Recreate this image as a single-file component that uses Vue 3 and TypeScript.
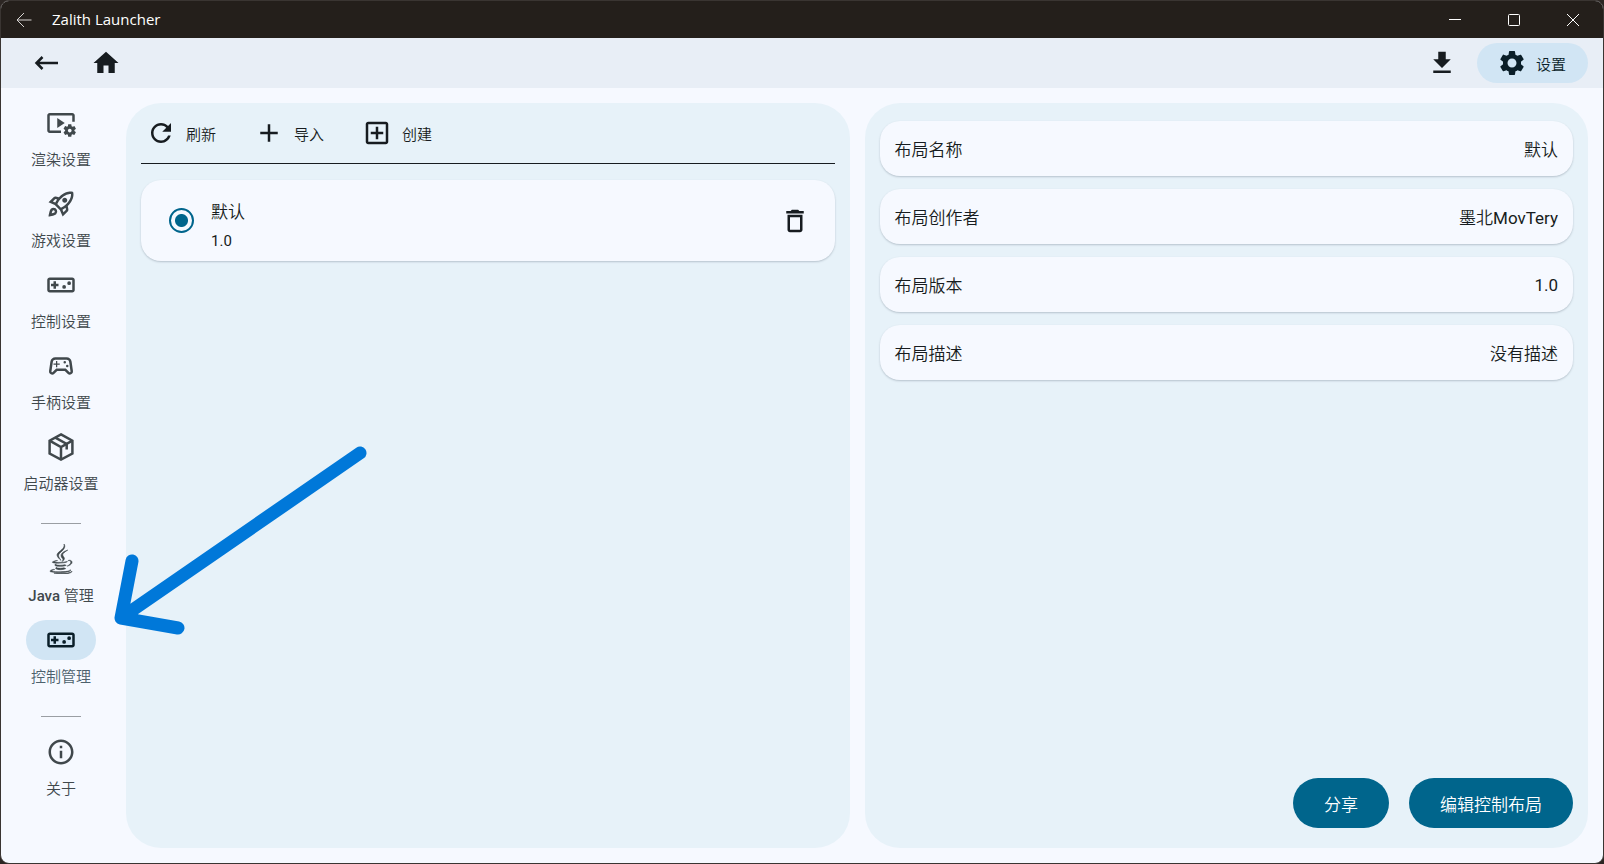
<script setup lang="ts">
import { ref } from 'vue'

interface NavItem {
  id: string
  label: string
  paths: string[]
  latin?: string
  viewBox?: string
  look?: string
}

const controllerPath =
  'M21 6H3c-1.1 0-2 .9-2 2v8c0 1.1.9 2 2 2h18c1.1 0 2-.9 2-2V8c0-1.1-.9-2-2-2zm0 10H3V8h18v8zM6 15h2v-2h2v-2H8V9H6v2H4v2h2zM13 13.5a1.5 1.5 0 1 0 3 0a1.5 1.5 0 1 0-3 0zM17 10.500a1.5 1.5 0 1 0 3 0a1.5 1.5 0 1 0-3 0z'

const groups: NavItem[][] = [
  [
    {
      id: 'renderer',
      label: '渲染设置',
      paths: [
        'M3 6h18v5h2V6c0-1.100-.9-2-2-2H3c-1.100 0-2 .9-2 2v12c0 1.100.9 2 2 2h9v-2H3V6z',
        'M15 12l-6-4v8z',
        'M22.71,18.43c0.03-0.29,0.04-0.58,0.01-0.86l1.07-0.85c0.1-0.08,0.12-0.21,0.06-0.32l-1.03-1.79c-0.06-0.11-0.19-0.15-0.31-0.11L21.23,15c-0.23-0.17-0.48-0.31-0.75-0.42l-0.2-1.36C20.26,13.09,20.16,13,20.03,13h-2.07c-0.12,0-0.23,0.09-0.25,0.21l-0.2,1.36c-0.26,0.11-0.51,0.26-0.74,0.42l-1.28-0.5c-0.12-0.05-0.25,0-0.31,0.11l-1.03,1.79c-0.06,0.11-0.04,0.24,0.06,0.32l1.07,0.86c-0.03,0.29-0.04,0.58-0.01,0.86l-1.07,0.85c-0.1,0.08-0.12,0.21-0.06,0.32l1.03,1.79c0.06,0.11,0.19,0.15,0.31,0.11l1.27-0.5c0.23,0.17,0.48,0.31,0.75,0.42l0.2,1.36c0.02,0.12,0.12,0.21,0.25,0.21h2.07c0.12,0,0.23-0.09,0.25-0.21l0.2-1.36c0.26-0.11,0.51-0.26,0.74-0.42l1.28,0.5c0.12,0.05,0.25,0,0.31-0.11l1.03-1.79c0.06-0.11,0.04-0.24-0.06-0.32L22.71,18.43z M19,19.5c-0.83,0-1.5-0.67-1.5-1.5s0.67-1.5,1.5-1.5s1.5,0.67,1.5,1.5S19.83,19.5,19,19.5z',
      ],
    },
    {
      id: 'game',
      label: '游戏设置',
      paths: [
        'M6 15c-.83 0-1.58.34-2.12.88C2.7 17.06 2 22 2 22s4.94-.7 6.12-1.88A2.996 2.996 0 0 0 6 15m.71 3.71c-.28.28-2.17.76-2.17.76s.47-1.88.76-2.17c.17-.19.42-.3.7-.3a1.003 1.003 0 0 1 .71 1.71m10.71-5.06c6.36-6.36 4.24-11.31 4.24-11.31S16.71.22 10.35 6.58l-2.49-.5a2.03 2.03 0 0 0-1.81.55L2 10.69l5 2.14L11.17 17l2.14 5 4.05-4.05c.47-.47.68-1.15.55-1.81zM7.41 10.83l-1.91-.82 1.97-1.97 1.44.29c-.57.83-1.08 1.7-1.5 2.5m6.58 7.67-.82-1.91c.8-.42 1.67-.93 2.49-1.5l.29 1.44zM16 12.24c-1.32 1.32-3.38 2.4-4.04 2.73l-2.93-2.93c.32-.65 1.4-2.71 2.73-4.04 4.68-4.68 8.23-3.99 8.23-3.99s.69 3.55-3.99 8.23M15 11c1.1 0 2-.9 2-2s-.9-2-2-2-2 .9-2 2 .9 2 2 2',
      ],
    },
    { id: 'control', label: '控制设置', paths: [controllerPath] },
    {
      id: 'gamepad',
      label: '手柄设置',
      paths: [
        'M21.58,16.09l-1.09-7.66C20.21,6.46,18.52,5,16.53,5H7.47C5.48,5,3.79,6.46,3.51,8.43l-1.09,7.66C2.2,17.63,3.39,19,4.94,19h0c0.68,0,1.32-0.27,1.8-0.75L9,16h6l2.25,2.25c0.48,0.48,1.13,0.75,1.8,0.75h0C20.61,19,21.8,17.63,21.58,16.09z M19.48,16.81C19.4,16.9,19.27,17,19.06,17c-0.15,0-0.29-0.06-0.39-0.16L15.83,14H8.17l-2.84,2.84C5.23,16.94,5.09,17,4.94,17c-0.21,0-0.34-0.1-0.42-0.19c-0.08-0.09-0.16-0.23-0.13-0.44l1.09-7.66C5.63,7.74,6.48,7,7.47,7h9.06c0.99,0,1.84,0.74,1.98,1.72l1.09,7.66C19.63,16.58,19.55,16.72,19.48,16.81z',
        'M9 8H8v2H6v1h2v2h1v-2h2v-1H9zM16 12a1 1 0 1 0 2 0a1 1 0 1 0-2 0zM14 9a1 1 0 1 0 2 0a1 1 0 1 0-2 0z',
      ],
    },
    {
      id: 'launcher',
      label: '启动器设置',
      viewBox: '0 0 30 30',
      look: 'line',
      paths: [
        'M15 2.400L26.400 8.700V21.500L15 27.700L3.600 21.500V8.700Z',
        'M3.600 8.700L15 15L26.400 8.700M15 15V27.700',
        'M9.300 5.600L20.700 11.900V17.500',
      ],
    },
  ],
  [
    {
      id: 'java',
      latin: 'Java',
      label: ' 管理',
      viewBox: '0 0 384 512',
      look: 'bold',
      paths: [
        'M277.74 312.9c9.8-6.7 23.4-12.5 23.4-12.5s-38.7 7-77.2 10.2c-47.1 3.9-97.7 4.7-123.1 1.3-60.1-8 33-30.1 33-30.1s-36.1-2.4-80.6 19c-52.5 25.4 130 37 224.5 12.1zm-85.4-32.1c-19-42.7-83.1-80.2 0-145.8C296 53.2 242.84 0 242.84 0c21.5 84.5-75.6 110.1-110.7 162.6-23.9 35.9 11.7 74.4 60.2 118.2zm114.6-176.2c.1 0-175.2 43.8-91.5 140.2 24.7 28.4-6.5 54-6.5 54s62.7-32.4 33.9-72.9c-26.9-37.8-47.5-56.6 64.1-121.3zm-6.1 270.5a12.19 12.19 0 0 1-2 2.6c128.3-33.7 81.1-118.9 19.8-97.3a17.33 17.33 0 0 0-8.2 6.3 70.45 70.45 0 0 1 11-3c31-6.5 75.5 41.5-20.6 91.4zM348 437.4s14.5 11.9-15.9 21.2c-57.9 17.5-240.8 22.8-291.6.7-18.3-7.9 16-19 26.8-21.3 11.2-2.4 17.7-2 17.7-2-20.3-14.3-131.3 28.1-56.4 40.2C232.84 509.4 401 461.3 348 437.4zM124.44 396c-78.7 22 47.9 67.4 148.1 24.5a185.89 185.89 0 0 1-28.2-13.8c-44.7 8.5-65.4 9.1-106 4.5-33.5-3.8-13.9-15.2-13.9-15.2zm179.8 97.2c-78.7 14.8-175.8 13.1-233.3 3.6 0-.1 11.8 9.7 72.4 13.6 92.2 5.9 233.8-3.3 237.1-46.9 0 0-6.4 16.5-76.2 29.7zM260.64 353c-59.2 11.4-93.5 11.1-136.8 6.6-33.5-3.5-11.6-19.7-11.6-19.7-86.8 28.8 48.2 61.4 169.5 25.9a60.37 60.37 0 0 1-21.1-12.8z',
      ],
    },
    { id: 'control-manage', label: '控制管理', paths: [controllerPath] },
  ],
  [
    {
      id: 'about',
      label: '关于',
      paths: [
        'M11 7h2v2h-2zM11 11h2v6h-2zM12 2C6.480 2 2 6.480 2 12s4.480 10 10 10 10-4.480 10-10S17.520 2 12 2zm0 18c-4.410 0-8-3.590-8-8s3.590-8 8-8 8 3.590 8 8-3.590 8-8 8z',
      ],
    },
  ],
]

const tools = [
  {
    label: '刷新',
    path: 'M17.65 6.35C16.2 4.9 14.21 4 12 4c-4.42 0-7.990 3.580-7.990 8s3.570 8 7.990 8c3.730 0 6.840-2.550 7.730-6h-2.080c-.82 2.330-3.040 4-5.650 4-3.310 0-6-2.690-6-6s2.690-6 6-6c1.660 0 3.140.69 4.220 1.780L13 11h7V4l-2.350 2.350z',
  },
  { label: '导入', path: 'M19 13h-6v6h-2v-6H5v-2h6V5h2v6h6v2z' },
  {
    label: '创建',
    path: 'M19 3H5c-1.110 0-2 .9-2 2v14c0 1.100.89 2 2 2h14c1.100 0 2-.9 2-2V5c0-1.100-.9-2-2-2zm0 16H5V5h14v14zm-8-2h2v-4h4v-2h-4V7h-2v4H7v2h4z',
  },
]

const details = [
  { name: '布局名称', value: '默认' },
  { name: '布局创作者', value: '墨北', latin: 'MovTery' },
  { name: '布局版本', value: '', latin: '1.0' },
  { name: '布局描述', value: '没有描述' },
]

const active = ref('control-manage')
const selected = ref('default')
</script>

<template>
  <div class="window">
    <header class="titlebar">
      <button class="title-back" aria-label="返回">
        <svg width="16" height="16" viewBox="0 0 16 16"><path d="M15.500 8H1M8 1L1 8L8 15" /></svg>
      </button>
      <span class="title">Zalith Launcher</span>
      <div class="caption">
        <button aria-label="最小化"><svg width="12" height="12" viewBox="0 0 12 12"><path d="M0 5.500H12" /></svg></button>
        <button aria-label="最大化"><svg width="12" height="12" viewBox="0 0 12 12"><rect x=".5" y=".5" width="11" height="11" rx="1" /></svg></button>
        <button aria-label="关闭"><svg width="12" height="12" viewBox="0 0 12 12"><path d="M0 0L12 12M12 0L0 12" /></svg></button>
      </div>
    </header>

    <nav class="topbar">
      <button class="icon-button" aria-label="后退">
        <svg class="icon line" viewBox="0 0 30 30"><path d="M27 15H6M11.500 9L5.500 15L11.500 21" /></svg>
      </button>
      <button class="icon-button" aria-label="主页">
        <svg class="icon" viewBox="0 0 24 24"><path d="M10 20v-6h4v6h5v-8h3L12 3 2 12h3v8z" /></svg>
      </button>
      <span class="spacer"></span>
      <button class="icon-button" aria-label="下载">
        <svg class="icon" viewBox="0 0 24 24"><path d="M19 9h-4V3H9v6H5l7 7 7-7zM5 18v2h14v-2H5z" /></svg>
      </button>
      <button class="settings">
        <svg class="icon" viewBox="0 0 24 24"><path d="M19.140 12.940c.04-.3.06-.61.06-.94 0-.32-.02-.64-.07-.94l2.030-1.580c.18-.14.23-.41.12-.61l-1.920-3.320c-.12-.22-.37-.29-.59-.22l-2.390.96c-.5-.38-1.030-.7-1.620-.94L14.400 2.810c-.04-.24-.24-.41-.48-.41h-3.840c-.24 0-.43.17-.47.41L9.250 5.350C8.660 5.590 8.120 5.920 7.630 6.290L5.240 5.330c-.22-.08-.47 0-.59.22L2.740 8.870c-.12.21-.08.47.12.61l2.030 1.580C4.840 11.360 4.800 11.690 4.800 12s.02.64.07.94l-2.030 1.580c-.18.14-.23.41-.12.61l1.920 3.320c.12.22.37.29.59.22l2.390-.96c.5.38 1.030.7 1.620.94l.36 2.540c.05.24.24.41.48.41h3.840c.24 0 .44-.17.47-.41l.36-2.540c.59-.24 1.130-.56 1.620-.94l2.390.96c.22.08.47 0 .59-.22l1.920-3.320c.12-.22.07-.47-.12-.61L19.140 12.940zM12 15.600c-1.980 0-3.600-1.620-3.600-3.600s1.620-3.600 3.600-3.600 3.600 1.620 3.600 3.600S13.980 15.600 12 15.600z" /></svg>
        <span>设置</span>
      </button>
    </nav>

    <div class="body">
      <aside class="sidebar">
        <template v-for="(group, g) in groups" :key="g">
          <hr v-if="g > 0" class="divider" />
          <button
            v-for="item in group"
            :key="item.id"
            class="nav-item"
            :class="{ active: active === item.id }"
            @click="active = item.id"
          >
            <span class="pill">
              <svg class="icon" :class="item.look" :viewBox="item.viewBox ?? '0 0 24 24'">
                <path v-for="(d, i) in item.paths" :key="i" :d="d" />
              </svg>
            </span>
            <span class="nav-label"><span v-if="item.latin" class="latin-strong">{{ item.latin }}</span>{{ item.label }}</span>
          </button>
        </template>
      </aside>

      <section class="panel">
        <div class="toolbar">
          <button v-for="tool in tools" :key="tool.label" class="tool">
            <svg class="icon" viewBox="0 0 24 24"><path :d="tool.path" /></svg>
            <span>{{ tool.label }}</span>
          </button>
        </div>
        <div class="card layout-card">
          <label class="choice">
            <input v-model="selected" type="radio" name="layout" value="default" />
            <span class="choice-text">
              <span class="choice-name">默认</span>
              <span class="choice-version">1.0</span>
            </span>
          </label>
          <button class="icon-button" aria-label="删除">
            <svg class="icon" viewBox="0 0 24 24"><path d="M6 19c0 1.100.9 2 2 2h8c1.100 0 2-.9 2-2V7H6v12zM8 9h8v10H8V9zm7.500-5l-1-1h-5l-1 1H5v2h14V4h-3.500z" /></svg>
          </button>
        </div>
      </section>

      <section class="panel detail-panel">
        <dl class="details">
          <div v-for="row in details" :key="row.name" class="card detail">
            <dt>{{ row.name }}</dt>
            <dd>{{ row.value }}<span v-if="row.latin" class="latin">{{ row.latin }}</span></dd>
          </div>
        </dl>
        <div class="actions">
          <button class="primary">分享</button>
          <button class="primary">编辑控制布局</button>
        </div>
      </section>
    </div>

    <svg class="pointer" width="290" height="220" viewBox="0 0 290 220" aria-hidden="true">
      <path d="M260 23L21 188M32 131L21 188L78 198" />
    </svg>
  </div>
</template>

<style>
body {
  margin: 0;
  background: #2c2623;
}
</style>

<style scoped>
.window {
  position: relative;
  box-sizing: border-box;
  display: flex;
  flex-direction: column;
  min-height: 100vh;
  border: 1px solid #3a3532;
  border-radius: 9px;
  overflow: hidden;
  background: #f6f9ff;
  color: #171c20;
  font-family: Roboto, "Noto Sans CJK SC", sans-serif;
  font-size: 17px;
  font-weight: 350;
}

button {
  padding: 0;
  border: 0;
  background: none;
  color: inherit;
  font: inherit;
  cursor: pointer;
}

.latin {
  font-weight: 400;
}

.latin-strong {
  font-weight: 500;
}

.icon {
  display: block;
  width: 30px;
  height: 30px;
  fill: currentColor;
}

.line {
  fill: none;
  stroke: currentColor;
  stroke-width: 2.5;
}

.bold {
  stroke: currentColor;
  stroke-width: 10;
}

.titlebar {
  display: flex;
  align-items: center;
  height: 37px;
  padding-left: 15px;
  background: #241f1b;
  color: #fff;
}

.title-back,
.caption button {
  display: flex;
  align-items: center;
  justify-content: center;
}

.titlebar svg {
  fill: none;
  stroke: currentColor;
}

.title-back {
  color: #d8d5d3;
}

.title {
  margin-left: 20px;
  padding-bottom: 2px;
  font-family: "Open Sans", "Noto Sans", sans-serif;
  font-size: 15px;
  font-weight: 400;
}

.caption {
  display: flex;
  align-self: stretch;
  margin-left: auto;
  padding-right: 1px;
}

.caption button {
  width: 59px;
}

.topbar {
  display: flex;
  align-items: center;
  gap: 20px;
  height: 50px;
  padding: 0 15px 0 25px;
  background: #e8eef6;
}

.icon-button {
  display: flex;
  align-items: center;
  justify-content: center;
  width: 40px;
  height: 40px;
}

.spacer {
  flex: 1;
}

.settings {
  display: flex;
  align-items: center;
  gap: 9px;
  height: 40px;
  margin-left: -5px;
  padding: 0 22px 0 20px;
  border-radius: 20px;
  background: #d1e5f4;
  color: #0a1e28;
  font-size: 15px;
}

.body {
  display: flex;
  flex: 1;
  gap: 15px;
  padding: 15px 15px 15px 0;
}

.sidebar {
  display: flex;
  flex-direction: column;
  align-items: center;
  gap: 14px;
  width: 120px;
  margin-right: -10px;
  color: #40484c;
}

.nav-item {
  display: flex;
  flex-direction: column;
  align-items: center;
  gap: 7px;
  width: 100%;
}

.pill {
  display: flex;
  align-items: center;
  justify-content: center;
  width: 70px;
  height: 40px;
  border-radius: 20px;
}

.active .pill {
  background: #d1e5f4;
  color: #0a1e28;
}

.active .nav-label {
  color: #4d616d;
}

.nav-label {
  font-size: 15px;
  line-height: 20px;
}

.divider {
  width: 40px;
  height: 1px;
  margin: 15px 0 1px;
  border: 0;
  background: #9a9ea3;
}

.panel {
  box-sizing: border-box;
  display: flex;
  flex: 1 1 0;
  flex-direction: column;
  min-width: 0;
  padding: 0 15px 20px;
  border-radius: 35px;
  background: #e7f2f9;
}

.toolbar {
  display: flex;
  align-items: center;
  gap: 38px;
  height: 60px;
  padding-left: 5px;
  border-bottom: 1px solid #171c20;
}

.tool {
  display: flex;
  align-items: center;
  gap: 10px;
  font-size: 15px;
}

.card {
  display: flex;
  align-items: center;
  justify-content: space-between;
  border-radius: 20px;
  background: #f6f9ff;
  box-shadow: 0 1px 2px rgba(40, 55, 75, 0.25);
}

.layout-card {
  height: 81px;
  margin-top: 16px;
  padding: 0 20px 0 28px;
}

.choice {
  display: flex;
  align-items: center;
  gap: 17px;
  cursor: pointer;
}

.choice input {
  appearance: none;
  width: 25px;
  height: 25px;
  margin: 0;
  border: 2px solid #00658c;
  border-radius: 50%;
}

.choice input:checked {
  background: radial-gradient(circle, #00658c 6px, transparent 7px);
}

.choice-text {
  display: flex;
  flex-direction: column;
  gap: 7px;
  padding-top: 9px;
}

.choice-name {
  line-height: 24px;
}

.choice-version {
  font-size: 15px;
  font-weight: 400;
  line-height: 20px;
}

.detail-panel {
  justify-content: space-between;
  padding-top: 18px;
}

.details {
  display: flex;
  flex-direction: column;
  gap: 13px;
  margin: 0;
}

.detail {
  height: 55px;
  padding: 0 15px;
}

.detail dd {
  margin: 0;
}

.actions {
  display: flex;
  justify-content: flex-end;
  gap: 20px;
}

.primary {
  height: 50px;
  padding: 0 31px;
  border-radius: 25px;
  background: #00658c;
  color: #fff;
}

.pointer {
  position: absolute;
  left: 99px;
  top: 429px;
  fill: none;
  stroke: #0078d9;
  stroke-width: 13;
  stroke-linecap: round;
  stroke-linejoin: round;
  pointer-events: none;
}
</style>
